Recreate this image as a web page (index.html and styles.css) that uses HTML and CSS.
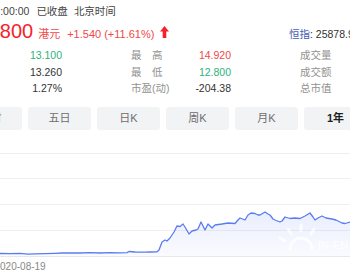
FILE: index.html
```html
<!DOCTYPE html>
<html lang="zh-CN">
<head>
<meta charset="utf-8">
<title>行情</title>
<link rel="stylesheet" href="styles.css">
</head>
<body>
<div class="page">
  <div class="status">
    <span class="time">16:00:00</span>
    <span class="closed">已收盘</span>
    <span>北京时间</span>
  </div>
  <div class="quote">
    <div class="price-line">
      <span class="price">14.800</span>
      <span class="unit">港元</span>
      <span class="change">+1.540 (+11.61%)</span>
      <svg class="arrow" width="9" height="12" viewBox="0 0 9 12"><polygon points="4.5,0 9,5.6 6.3,5.6 6.3,12 2.7,12 2.7,5.6 0,5.6" fill="#f5222d"/></svg>
    </div>
    <div class="index"><span class="index-name">恒指</span>: 25878.95</div>
  </div>
  <div class="stats">
    <div class="cell"><span class="label">今　开</span><span class="value down">13.100</span></div>
    <div class="cell"><span class="label">最　高</span><span class="value up">14.920</span></div>
    <div class="cell"><span class="label">成交量</span><span class="value">1.23亿</span></div>
    <div class="cell"><span class="label">昨　收</span><span class="value">13.260</span></div>
    <div class="cell"><span class="label">最　低</span><span class="value down">12.800</span></div>
    <div class="cell"><span class="label">成交额</span><span class="value">17.8亿</span></div>
    <div class="cell"><span class="label">换手率</span><span class="value">1.27%</span></div>
    <div class="cell"><span class="label">市盈(动)</span><span class="value">-204.38</span></div>
    <div class="cell"><span class="label">总市值</span><span class="value">1439亿</span></div>
  </div>
  <div class="tabs">
    <div class="tab">分时</div>
    <div class="tab">五日</div>
    <div class="tab">日K</div>
    <div class="tab">周K</div>
    <div class="tab">月K</div>
    <div class="tab active">1年</div>
  </div>
  <div class="chart">
    <svg class="plot" width="350" height="118" viewBox="0 0 350 118">
      <defs>
        <linearGradient id="area" x1="0" y1="0" x2="0" y2="1">
          <stop offset="0" stop-color="#5b7cf0" stop-opacity="0.13"/>
          <stop offset="1" stop-color="#5b7cf0" stop-opacity="0.03"/>
        </linearGradient>
      </defs>
      <g stroke="#efefef" stroke-width="1">
        <line x1="0" y1="12.5" x2="350" y2="12.5"/>
        <line x1="0" y1="37.5" x2="350" y2="37.5"/>
        <line x1="0" y1="63.5" x2="350" y2="63.5"/>
        <line x1="0" y1="89.5" x2="350" y2="89.5"/>
        <line x1="0" y1="115.5" x2="350" y2="115.5" stroke="#e8e8e8"/>
      </g>
      <path fill="url(#area)" d="M0,112.5 L10,112.7 L20,112.4 L28,113.2 L35,112.8 L45,112.6 L55,112.3 L62,112 L70,111.8 L80,112 L90,111.7 L100,112 L110,111.6 L120,111.8 L127,111.6 L129,110.5 L135,111 L145,111.2 L150,111 L157,110.8 L159,109 L162,101 L165,99 L167,100 L170,97 L174,91 L177,85 L180,85.5 L183,83 L185,86 L189,93 L192,90 L196,89 L198,88 L201,81 L205,89 L208,83 L212,87 L215,84 L222,83 L228,82 L235,82.5 L238,79 L240,77 L245,79 L248,74 L251,72 L255,72.5 L258,74 L260,74 L265,71 L268,73 L270,74 L273,78 L275,79 L280,81 L282,80 L285,76 L290,77.5 L295,77 L300,77.5 L305,75 L310,72 L313,76 L315,79 L318,77 L322,75 L326,77 L332,78 L336,79 L338,80 L342,82 L345,82.5 L350,81 L350,115 L0,115 Z"/>
      <path fill="none" stroke="#5b7cf0" stroke-width="1.3" stroke-linejoin="round" d="M0,112.5 L10,112.7 L20,112.4 L28,113.2 L35,112.8 L45,112.6 L55,112.3 L62,112 L70,111.8 L80,112 L90,111.7 L100,112 L110,111.6 L120,111.8 L127,111.6 L129,110.5 L135,111 L145,111.2 L150,111 L157,110.8 L159,109 L162,101 L165,99 L167,100 L170,97 L174,91 L177,85 L180,85.5 L183,83 L185,86 L189,93 L192,90 L196,89 L198,88 L201,81 L205,89 L208,83 L212,87 L215,84 L222,83 L228,82 L235,82.5 L238,79 L240,77 L245,79 L248,74 L251,72 L255,72.5 L258,74 L260,74 L265,71 L268,73 L270,74 L273,78 L275,79 L280,81 L282,80 L285,76 L290,77.5 L295,77 L300,77.5 L305,75 L310,72 L313,76 L315,79 L318,77 L322,75 L326,77 L332,78 L336,79 L338,80 L342,82 L345,82.5 L350,81"/>
      <g class="watermark" fill="none" stroke="#ffffff" stroke-opacity="0.75" stroke-width="3" stroke-linecap="round">
        <path d="M290,108 A11,11 0 1 1 312,108"/>
        <line x1="301" y1="90" x2="301" y2="84"/>
        <line x1="291" y1="93" x2="288" y2="88"/>
        <line x1="311" y1="93" x2="314" y2="88"/>
        <line x1="285" y1="100" x2="280" y2="97"/>
      </g>
      <text x="318" y="108" class="wm-text">IN-EN</text>
    </svg>
    <div class="axis">2020-08-19</div>
  </div>
</div>
</body>
</html>
```

FILE: styles.css
```css
html, body {
  margin: 0;
  padding: 0;
  background: #ffffff;
}

body {
  font-family: "Liberation Sans", "Noto Sans CJK SC", sans-serif;
  color: #333333;
  overflow: hidden;
}

.page {
  width: 350px;
  height: 275px;
  overflow: hidden;
}

.status {
  display: flex;
  height: 23px;
  line-height: 23px;
  font-size: 10.5px;
  color: #444444;
  white-space: nowrap;
}

.status .time {
  margin-left: -11.5px;
  margin-right: 7px;
}

.status .closed {
  margin-right: 6px;
}

.quote {
  display: grid;
  grid-template-columns: 289px auto;
  align-items: baseline;
  height: 16px;
  white-space: nowrap;
}

.price-line {
  display: flex;
  align-items: baseline;
}

.price {
  font-size: 20px;
  line-height: 16px;
  color: #f5222d;
  margin-left: -28px;
}

.unit {
  font-size: 11px;
  color: #f04848;
  margin-left: 5px;
}

.change {
  font-size: 11px;
  color: #f04848;
  margin-left: 7px;
}

.arrow {
  display: block;
  margin-left: 6px;
  margin-bottom: -3px;
}

.index {
  font-size: 10.5px;
  color: #333333;
}

.index-name {
  color: #3f5bb5;
}

.stats {
  margin-top: 8px;
  margin-left: -38px;
  display: grid;
  grid-template-columns: repeat(3, 100px);
  column-gap: 69px;
  font-size: 10.5px;
  line-height: 16.5px;
  white-space: nowrap;
}

.cell {
  display: flex;
  justify-content: space-between;
}

.label {
  color: #929292;
}

.value {
  color: #333333;
}

.value.up {
  color: #f04848;
}

.value.down {
  color: #2bb47c;
}

.tabs {
  margin-top: 10px;
  margin-left: -41px;
  display: flex;
  gap: 6px;
}

.tab {
  flex: 0 0 63px;
  height: 23px;
  line-height: 23px;
  text-align: center;
  background: #f2f3f5;
  border-radius: 3px;
  font-size: 11px;
  color: #6e6e6e;
}

.tab.active {
  color: #1f1f1f;
  font-weight: bold;
}

.chart {
  margin-top: 11px;
}

.plot {
  display: block;
}

.wm-text {
  font-family: "Liberation Sans", sans-serif;
  font-size: 11px;
  font-weight: bold;
  fill: #ffffff;
  fill-opacity: 0.75;
}

.axis {
  font-size: 10px;
  line-height: 16px;
  color: #888888;
  margin-left: -5.5px;
  white-space: nowrap;
}
```
